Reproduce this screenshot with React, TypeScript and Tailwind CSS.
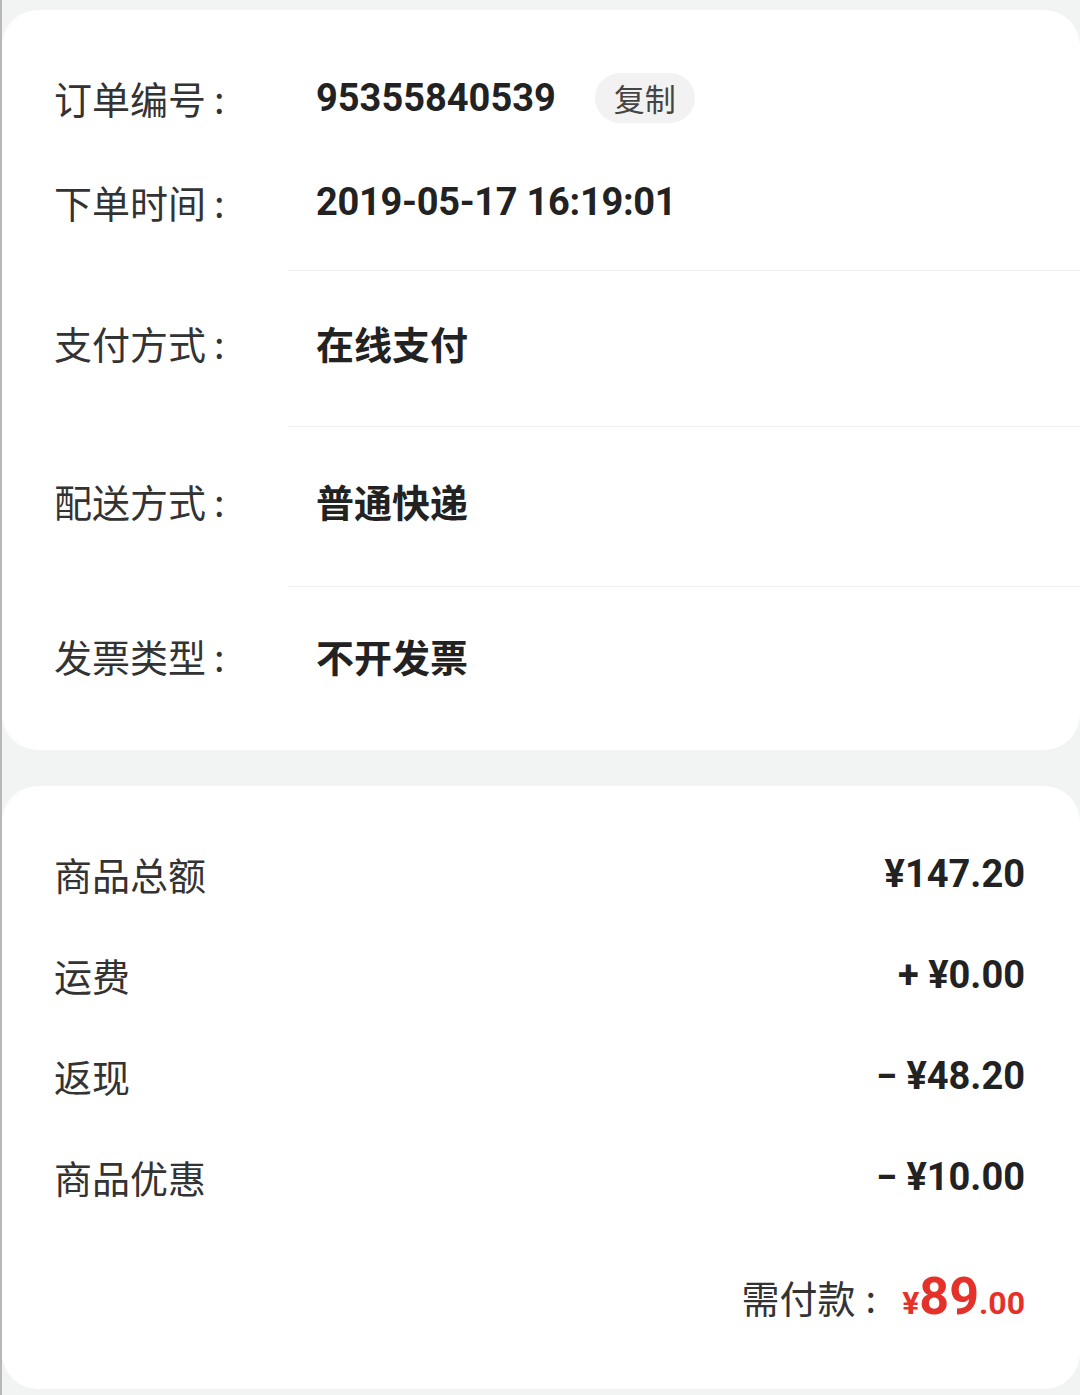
import React from "react";

const cjk = { fontFamily: '"Noto Sans CJK SC", "Noto Sans", sans-serif' };
const num = { fontFamily: 'Roboto, "Noto Sans CJK SC", sans-serif' };

function Label({ children }: { children: React.ReactNode }) {
  return (
    <span className="w-[262px] shrink-0 flex items-center text-[38px] leading-none text-[#333333]" style={cjk}>
      <span>{children}</span>
      <span className="ml-[8px]">:</span>
    </span>
  );
}

function Divider() {
  return <div className="ml-[286px] h-px bg-[#f0f0f0]" />;
}

export default function App() {
  const lines = [
    { label: "商品总额", value: "¥147.20" },
    { label: "运费", value: "+ ¥0.00" },
    { label: "返现", value: "− ¥48.20" },
    { label: "商品优惠", value: "− ¥10.00" },
  ];
  return (
    <div className="min-h-[1395px] w-[1080px] bg-[#f2f3f3] pt-[10px] border-l-[2px] border-[#b8b8b8]" style={cjk}>
      {/* Card 1 */}
      <div className="bg-white rounded-[36px] h-[740px] flex flex-col">
        <div className="pt-[36px] pl-[52px]">
          <div className="h-[104px] flex items-center">
            <Label>订单编号</Label>
            <span className="text-[38px] font-bold text-[#222222] leading-none" style={num}>
              95355840539
            </span>
            <span className="ml-[39px] h-[50px] w-[100px] rounded-full bg-[#f2f2f2] flex items-center justify-center text-[31px] text-[#444444]" style={cjk}>
              复制
            </span>
          </div>
          <div className="h-[104px] flex items-center">
            <Label>下单时间</Label>
            <span className="text-[38px] font-bold text-[#222222] leading-none tracking-[-0.3px]" style={num}>
              2019-05-17 16:19:01
            </span>
          </div>
        </div>
        <div className="h-[16px]" />
        <Divider />
        <div className="h-[155px] pl-[52px] pb-[11px] flex items-center">
          <Label>支付方式</Label>
          <span className="text-[38px] font-bold text-[#222222] leading-none">在线支付</span>
        </div>
        <Divider />
        <div className="h-[159px] pl-[52px] pb-[11px] flex items-center">
          <Label>配送方式</Label>
          <span className="text-[38px] font-bold text-[#222222] leading-none">普通快递</span>
        </div>
        <Divider />
        <div className="flex-1 pl-[52px] pb-[25px] flex items-center">
          <Label>发票类型</Label>
          <span className="text-[38px] font-bold text-[#222222] leading-none">不开发票</span>
        </div>
      </div>

      {/* Card 2 */}
      <div className="mt-[36px] bg-white rounded-[36px] h-[603px] pt-[37px] pl-[52px] pr-[55px]">
        {lines.map((l) => (
          <div key={l.label} className="h-[101px] flex items-center justify-between">
            <span className="text-[38px] leading-none text-[#333333]">{l.label}</span>
            <span className="text-[38px] font-bold leading-none text-[#222222]" style={num}>
              {l.value}
            </span>
          </div>
        ))}
        <div className="mt-[19px] h-[101px] flex items-center justify-end">
          <span className="text-[38px] leading-none text-[#333333]">需付款</span>
          <span className="ml-[10px] mr-[26px] text-[38px] leading-none text-[#333333]">:</span>
          <span className="flex items-baseline font-bold text-[#e4322b] leading-none" style={num}>
            <span className="text-[32px]">¥</span>
            <span className="text-[52px]">89</span>
            <span className="text-[32px]">.00</span>
          </span>
        </div>
      </div>
    </div>
  );
}
